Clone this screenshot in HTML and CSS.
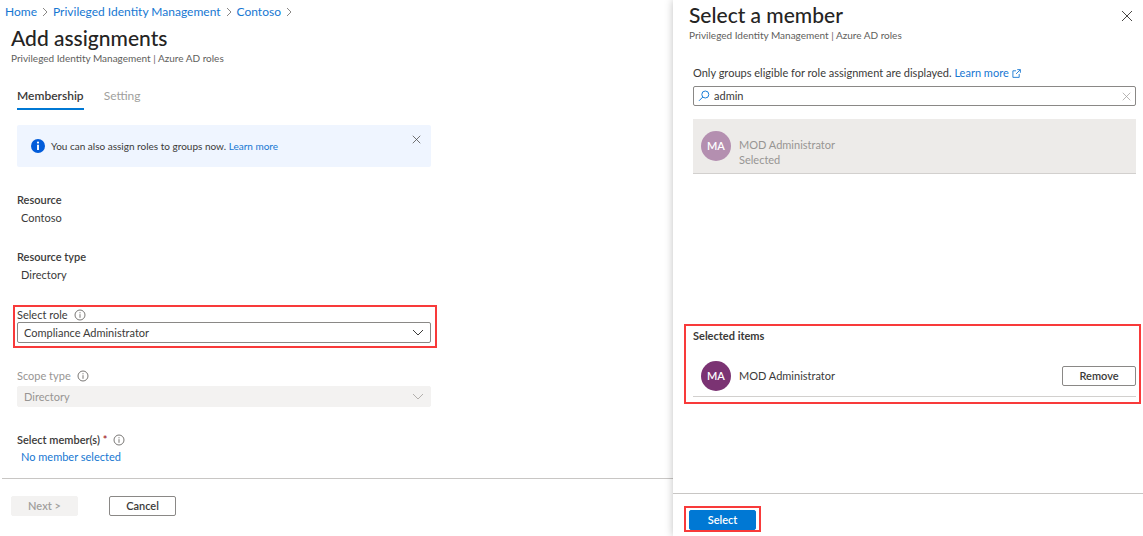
FILE: index.html
```html
<!DOCTYPE html>
<html lang="en">
<head>
<meta charset="utf-8">
<meta name="viewport" content="width=device-width, initial-scale=1">
<title>Add assignments</title>
<link rel="stylesheet" href="styles.css">
</head>
<body>
<svg class="sprite" aria-hidden="true">
  <symbol id="cross" viewBox="0 0 12 12"><path d="M1 1l10 10M11 1L1 11"/></symbol>
  <symbol id="right" viewBox="0 0 6 10"><path d="M1 1l4 4-4 4"/></symbol>
  <symbol id="down" viewBox="0 0 12 8"><path d="M1 1l5 5 5-5"/></symbol>
  <symbol id="info" viewBox="0 0 12 12"><circle cx="6" cy="6" r="5"/><path d="M6 5.2v3.6M6 3.2v1.1"/></symbol>
</svg>
<div class="layout">
  <main class="page">
    <nav class="crumbs" aria-label="Breadcrumb">
      <a href="#">Home</a><svg class="crumb-sep"><use href="#right"/></svg>
      <a href="#">Privileged Identity Management</a><svg class="crumb-sep"><use href="#right"/></svg>
      <a href="#">Contoso</a><svg class="crumb-sep"><use href="#right"/></svg>
    </nav>
    <header class="page-head">
      <h1 class="title">Add assignments</h1>
      <p class="subtitle">Privileged Identity Management | Azure AD roles</p>
    </header>
    <div class="form">
      <div class="tabs" role="tablist">
        <button class="tab tab-active" role="tab" aria-selected="true">Membership</button>
        <button class="tab" role="tab" aria-selected="false" disabled>Setting</button>
      </div>
      <div class="banner">
        <svg class="banner-icon" viewBox="0 0 14 14"><circle cx="7" cy="7" r="7" fill="#015cda"/><circle cx="7" cy="3.6" r="1.1" fill="#fff"/><path d="M7 5.7v5.3" stroke="#fff" stroke-width="1.9"/></svg>
        <p class="banner-text">You can also assign roles to groups now. <a href="#">Learn more</a></p>
        <button class="icon-button banner-close" aria-label="Dismiss"><svg><use href="#cross"/></svg></button>
      </div>
      <dl class="facts">
        <div class="fact"><dt>Resource</dt><dd>Contoso</dd></div>
        <div class="fact"><dt>Resource type</dt><dd>Directory</dd></div>
      </dl>
      <div class="field highlight role-highlight">
        <div class="label-row"><label for="role">Select role</label><svg class="info"><use href="#info"/></svg></div>
        <div class="select-wrap">
          <select id="role" class="select"><option>Compliance Administrator</option></select>
          <svg class="chevron"><use href="#down"/></svg>
        </div>
      </div>
      <div class="field field-disabled">
        <div class="label-row"><label for="scope">Scope type</label><svg class="info"><use href="#info"/></svg></div>
        <div class="select-wrap">
          <select id="scope" class="select" disabled><option>Directory</option></select>
          <svg class="chevron"><use href="#down"/></svg>
        </div>
      </div>
      <div class="members">
        <div class="label-row"><span class="strong">Select member(s) <span class="required">*</span></span><svg class="info"><use href="#info"/></svg></div>
        <a class="member-link" href="#">No member selected</a>
      </div>
    </div>
    <footer class="page-foot">
      <button class="button" disabled>Next &gt;</button>
      <button class="button">Cancel</button>
    </footer>
  </main>
  <aside class="panel" aria-label="Select a member">
    <header class="panel-head">
      <div>
        <h2 class="title">Select a member</h2>
        <p class="subtitle">Privileged Identity Management | Azure AD roles</p>
      </div>
      <button class="icon-button panel-close" aria-label="Close"><svg><use href="#cross"/></svg></button>
    </header>
    <div class="panel-body">
      <p class="note">Only groups eligible for role assignment are displayed. <a href="#">Learn more <svg class="external" viewBox="0 0 10 10"><path d="M4.5 2H1v7.300h7V5.500M5.800.7h3.500v3.500M9.200.8L4.500 5.500"/></svg></a></p>
      <div class="search">
        <svg class="search-icon" viewBox="0 0 12 12"><circle cx="7.300" cy="4.500" r="3.500"/><path d="M4.800 7L1 10.800"/></svg>
        <input class="search-input" type="text" value="admin" aria-label="Search members">
        <button class="icon-button search-clear" aria-label="Clear search"><svg><use href="#cross"/></svg></button>
      </div>
      <div class="person person-selected">
        <span class="avatar">MA</span>
        <div class="person-text"><span>MOD Administrator</span><span>Selected</span></div>
      </div>
      <section class="highlight chosen">
        <h3 class="chosen-title">Selected items</h3>
        <div class="person chosen-person">
          <span class="avatar">MA</span>
          <span class="person-name">MOD Administrator</span>
          <button class="button remove">Remove</button>
        </div>
      </section>
    </div>
    <footer class="panel-foot">
      <div class="highlight select-highlight"><button class="button primary">Select</button></div>
    </footer>
  </aside>
</div>
</body>
</html>
```
FILE: styles.css
```css
* { box-sizing: border-box; }
body {
  margin: 0;
  background: #fff;
  color: #3b3a39;
  font: 11px/16px Lato, "Open Sans", sans-serif;
}
h1, h2, h3, p, dl, dd { margin: 0; }
a { color: #1677d2; text-decoration: none; }
button, input, select { font: inherit; color: inherit; }
button { cursor: pointer; }
button:disabled { cursor: default; }
svg { fill: none; stroke: currentColor; flex: none; }
.sprite { position: absolute; width: 0; height: 0; }

.layout {
  display: grid;
  grid-template-columns: minmax(0, 1fr) 470px;
  min-height: 100vh;
}
.page { display: flex; flex-direction: column; }

.crumbs {
  display: flex;
  align-items: center;
  gap: 5px;
  height: 23px;
  padding-left: 5px;
  font-size: 12px;
}
.crumb-sep { width: 6px; height: 10px; color: #8a8886; }
.page-head { padding: 3px 11px 0; }
.title { font-size: 21px; line-height: 24px; font-weight: 500; color: #252423; }
.subtitle { font-size: 10px; color: #605e5c; }

.form { flex: 1; max-width: 431px; padding: 20px 0 0 17px; }
.tabs { display: flex; gap: 20px; }
.tab {
  padding: 0 0 2px;
  border: 0;
  border-bottom: 2px solid transparent;
  background: none;
  line-height: 20px;
  font-size: 12px;
}
.tab:disabled { color: #a19f9d; }
.tab-active { border-color: #0078d4; font-weight: 600; }

.banner {
  display: flex;
  align-items: center;
  gap: 6px;
  height: 42px;
  margin-top: 15px;
  padding: 0 10px 0 14px;
  border-radius: 2px;
  background: #eff5ff;
}
.banner-icon { width: 14px; height: 14px; stroke: none; }
.banner-text { flex: 1; font-size: 10px; }
.banner-close { align-self: flex-start; margin-top: 10px; }
.icon-button { display: flex; padding: 0; border: 0; background: none; color: #484644; }
.icon-button svg { width: 9px; height: 9px; }

.facts { display: grid; gap: 23px; margin-top: 25px; }
.fact { display: grid; gap: 2px; }
.fact dt, .strong { font-weight: 600; }
.fact dd { padding-left: 4px; }

.highlight { border: 2px solid #f83a3a; }
.role-highlight { margin: 22px -6px 0 -4px; padding: 0 4px 3px 2px; }
.label-row { display: flex; align-items: center; gap: 6px; height: 15px; }
.info { width: 12px; height: 12px; color: #797775; }
.select-wrap { position: relative; }
.select {
  display: block;
  appearance: none;
  width: 100%;
  height: 21px;
  padding: 0 24px 0 6px;
  border: 1px solid #8a8886;
  border-radius: 2px;
  background: #fff;
}
.chevron { position: absolute; right: 7px; top: 7px; width: 12px; height: 8px; pointer-events: none; }
.field-disabled { margin-top: 20px; color: #979593; }
.field-disabled .label-row { margin-bottom: 3px; }
.select:disabled { border-color: #f3f2f1; background: #f3f2f1; color: #979593; opacity: 1; }
.field-disabled .chevron { color: #b3b0ad; }
.members { margin-top: 25px; }
.required { color: #a4262c; }
.member-link { display: block; padding-left: 4px; margin-top: 2px; }

.page-foot {
  display: flex;
  gap: 31px;
  height: 58px;
  margin-left: 2px;
  padding: 17px 9px;
  border-top: 1px solid #c8c6c4;
}
.button {
  min-width: 67px;
  height: 20px;
  padding: 0;
  border: 1px solid #8a8886;
  border-radius: 2px;
  background: #fff;
  font-size: 11px;
  line-height: 16px;
  font-weight: 600;
}
.button:disabled { border-color: #f3f2f1; background: #f3f2f1; color: #a19f9d; }

.panel {
  display: flex;
  flex-direction: column;
  min-width: 0;
  background: #fff;
  box-shadow: 0 0 8px rgba(0, 0, 0, 0.25);
}
.panel-head { display: flex; justify-content: space-between; padding: 3px 10px 0 16px; }
.panel-close { align-self: flex-start; margin-top: 7px; }
.panel-close svg { width: 12px; height: 12px; }
.panel-body { flex: 1; padding: 22px 7px 0 20px; }
.external { width: 9px; height: 9px; vertical-align: -1px; }
.search {
  display: flex;
  align-items: center;
  gap: 4px;
  height: 20px;
  margin-top: 5px;
  padding: 0 4px;
  border: 1px solid #8a8886;
  border-radius: 2px;
}
.search-icon { width: 12px; height: 12px; color: #1b7fd8; }
.search-input { flex: 1; min-width: 0; padding: 0; border: 0; outline: 0; background: none; }
.search-clear { color: #a19f9d; }
.person { display: flex; align-items: center; gap: 8px; padding-left: 8px; }
.avatar {
  flex: none;
  width: 30px;
  border-radius: 50%;
  background: #7b3373;
  color: #fff;
  font-weight: 600;
  line-height: 30px;
  text-align: center;
}
.person-selected {
  height: 55px;
  margin-top: 13px;
  border-bottom: 1px solid #d2d0ce;
  background: #edebe9;
  color: #979593;
}
.person-selected .avatar { background: #b48fb0; }
.person-text { display: grid; padding-top: 12px; line-height: 15px; }
.chosen { height: 80px; margin: 150px -5px 0 -9px; padding: 2px 3px 0 7px; }
.chosen-title { font-size: 11px; line-height: 16px; font-weight: 700; }
.chosen-person { height: 42px; margin-top: 11px; border-bottom: 1px solid #d2d0ce; }
.person-name { flex: 1; }
.remove { min-width: 74px; }
.panel-foot { display: flex; height: 43px; padding: 12px 11px 0; border-top: 1px solid #c8c6c4; }
.select-highlight { height: 26px; padding: 2px 3px; }
.primary { border-color: #0078d4; background: #0078d4; color: #fff; }
```
